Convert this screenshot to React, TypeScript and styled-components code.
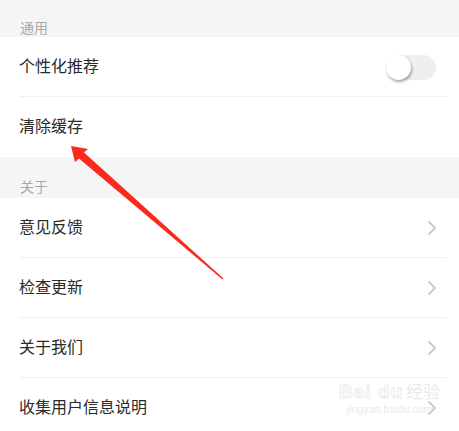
import React, { useState } from 'react';
import styled, { createGlobalStyle } from 'styled-components';

const GlobalStyle = createGlobalStyle`
  html, body {
    margin: 0;
    padding: 0;
    background: #f5f5f5;
    font-family: "Noto Sans CJK SC", "Noto Sans", sans-serif;
  }
`;

interface Item {
  label: string;
  kind: 'switch' | 'plain' | 'link';
}

interface Section {
  title: string;
  height: number;
  items: Item[];
}

const sections: Section[] = [
  {
    title: '通用',
    height: 37,
    items: [
      { label: '个性化推荐', kind: 'switch' },
      { label: '清除缓存', kind: 'plain' },
    ],
  },
  {
    title: '关于',
    height: 41,
    items: [
      { label: '意见反馈', kind: 'link' },
      { label: '检查更新', kind: 'link' },
      { label: '关于我们', kind: 'link' },
      { label: '收集用户信息说明', kind: 'link' },
    ],
  },
];

const Page = styled.div`
  position: relative;
  width: 459px;
  height: 431px;
  overflow: hidden;
  background: #f5f5f5;
`;

const SectionHeader = styled.div<{ $h: number }>`
  height: ${p => p.$h}px;
  box-sizing: border-box;
  display: flex;
  align-items: flex-end;
  padding: 0 20px ${p => 1 + (p.$h - 37) / 2}px;
  font-size: 14px;
  line-height: 18px;
  color: #a9a9a9;
`;

const List = styled.div`
  background: #fff;
`;

const Row = styled.div<{ $last: boolean }>`
  position: relative;
  height: 60px;
  box-sizing: border-box;
  display: flex;
  align-items: center;
  justify-content: space-between;
  padding: 0 22px 4px 19px;
  font-size: 16px;
  line-height: 20px;
  color: #2a2a2a;
  &::after {
    content: '';
    display: ${p => (p.$last ? 'none' : 'block')};
    position: absolute;
    left: 19px;
    right: 13px;
    bottom: 0;
    height: 1px;
    background: #f0f0f0;
  }
`;

const Track = styled.button<{ $on: boolean }>`
  position: relative;
  width: 50px;
  height: 25px;
  margin: 5px 1px 0 0;
  border: none;
  padding: 0;
  border-radius: 13px;
  background: ${p => (p.$on ? '#4cd964' : '#efefef')};
  cursor: pointer;
`;

const Knob = styled.span<{ $on: boolean }>`
  position: absolute;
  top: 0;
  left: ${p => (p.$on ? '25px' : '0')};
  width: 25px;
  height: 25px;
  border-radius: 50%;
  background: #fff;
  box-shadow: 1px 2px 3px rgba(0, 0, 0, 0.35);
`;

const Overlay = styled.svg`
  position: absolute;
  left: 0;
  top: 0;
  pointer-events: none;
`;

const Watermark = styled.div`
  position: absolute;
  left: 339px;
  top: 380px;
  font-family: "Liberation Sans", sans-serif;
  pointer-events: none;
  display: flex;
  flex-direction: column;
  align-items: center;
`;

const MarkTop = styled.div`
  display: flex;
  align-items: baseline;
  gap: 3px;
  line-height: 22px;
`;

const MarkLatin = styled.span`
  font-size: 19px;
  font-weight: bold;
  letter-spacing: 1px;
  color: rgba(255, 255, 255, 0.6);
  -webkit-text-stroke: 1px rgba(222, 222, 222, 0.6);
`;

const MarkCjk = styled.span`
  font-family: "Noto Sans CJK SC", sans-serif;
  font-size: 17px;
  color: rgba(226, 226, 226, 0.75);
`;

const MarkUrl = styled.div`
  font-size: 10px;
  line-height: 14px;
  letter-spacing: 0.3px;
  color: rgba(220, 220, 220, 0.7);
`;

const Chevron = () => (
  <svg width="10" height="16" viewBox="0 0 10 16" style={{ marginTop: 3 }}>
    <path d="M1.5 1.5 L8 8 L1.5 14.5" fill="none" stroke="#cbcbcb" strokeWidth="2" />
  </svg>
);

export default function App() {
  const [on, setOn] = useState(false);
  return (
    <Page>
      <GlobalStyle />
      {sections.map(sec => (
        <div key={sec.title}>
          <SectionHeader $h={sec.height}>
            <span>{sec.title}</span>
          </SectionHeader>
          <List>
            {sec.items.map((it, i) => (
              <Row key={it.label} $last={i === sec.items.length - 1}>
                <span>{it.label}</span>
                {it.kind === 'switch' && (
                  <Track $on={on} onClick={() => setOn(!on)}>
                    <Knob $on={on} />
                  </Track>
                )}
                {it.kind === 'link' && <Chevron />}
              </Row>
            ))}
          </List>
        </div>
      ))}
      <Watermark>
        <MarkTop>
          <MarkLatin>Bai du</MarkLatin>
          <MarkCjk>经验</MarkCjk>
        </MarkTop>
        <MarkUrl>jingyan.baidu.com</MarkUrl>
      </Watermark>
      <Overlay width="459" height="431" viewBox="0 0 459 431">
        <polygon
          points="71,146 88,149 84,152.5 223.5,278.5 222.5,279.5 79,158.5 75,162"
          fill="#fb2a1c"
        />
      </Overlay>
    </Page>
  );
}
